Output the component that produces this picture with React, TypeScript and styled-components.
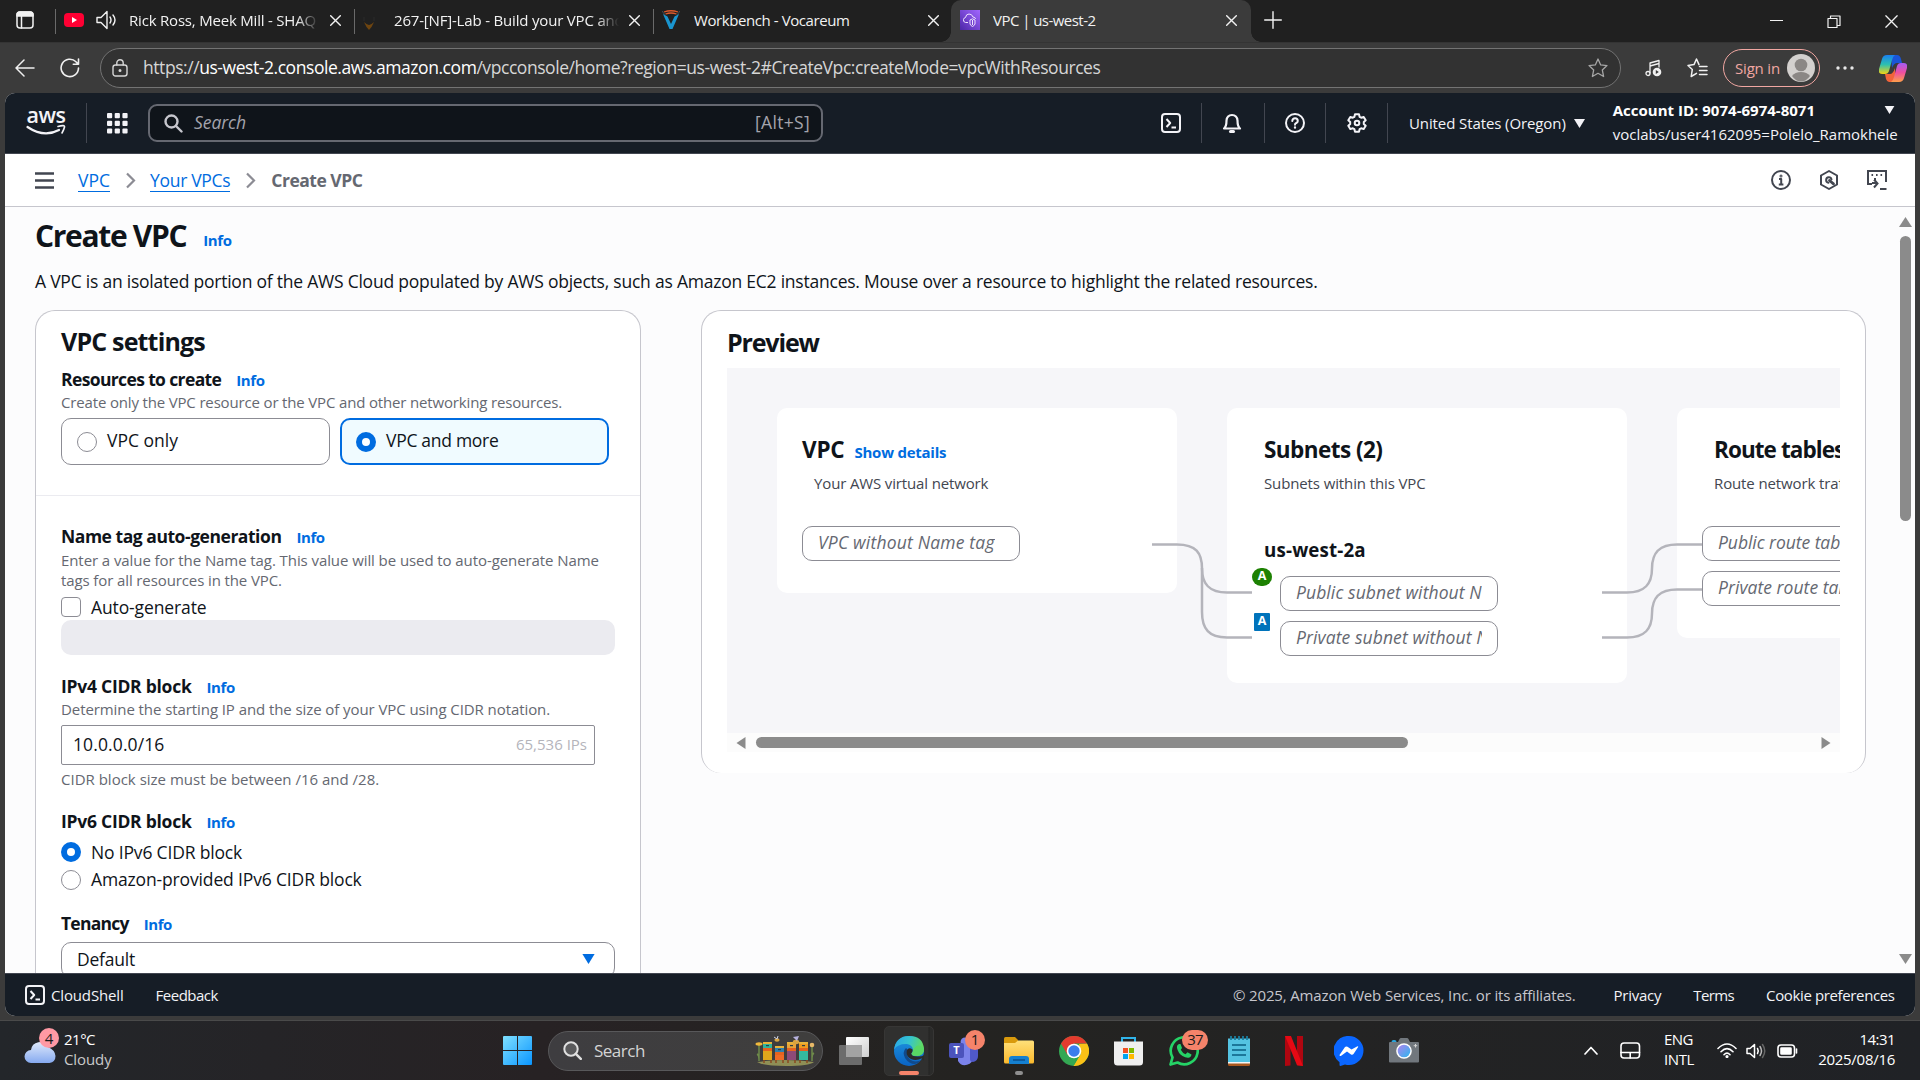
import React from 'react';
import styled, { createGlobalStyle } from 'styled-components';

const Global = createGlobalStyle`
  * { box-sizing: border-box; }
  body { margin: 0; background: #3b3b3b; font-family: "Open Sans", "Noto Sans", sans-serif; overflow: hidden; }
  svg { display: block; flex: none; }
`;

/* ---------- shared ---------- */

type TextProps = { $size?: number; $weight?: number; $ls?: number; $color?: string; $italic?: boolean; $lh?: number; $ml?: number; $mt?: number };

const Text = styled.span<TextProps>`
  display: block;
  flex: none;
  white-space: nowrap;
  font-size: ${p => p.$size ?? 15}px;
  font-weight: ${p => p.$weight ?? 400};
  font-style: ${p => (p.$italic ? 'italic' : 'normal')};
  letter-spacing: ${p => p.$ls ?? 0}px;
  line-height: ${p => p.$lh ?? 20}px;
  color: ${p => p.$color ?? 'inherit'};
  margin-left: ${p => p.$ml ?? 0}px;
  margin-top: ${p => p.$mt ?? 0}px;
`;

const Screen = styled.div`
  width: 1920px;
  height: 1080px;
  display: flex;
  flex-direction: column;
  overflow: hidden;
  background: #3b3b3b;
`;

const Slot = styled.div<{ $ml?: number; $mt?: number }>`
  flex: none;
  display: flex;
  margin-left: ${p => p.$ml ?? 0}px;
  margin-top: ${p => p.$mt ?? 0}px;
`;

const Stroke = ({ w, h, sw = 1.5, children, color = 'currentColor', vb }: { w: number; h: number; sw?: number; color?: string; vb?: string; children: React.ReactNode }) => (
  <svg width={w} height={h} viewBox={vb ?? `0 0 ${w} ${h}`} fill="none" stroke={color} strokeWidth={sw} strokeLinecap="round" strokeLinejoin="round">
    {children}
  </svg>
);

/* ---------- browser chrome ---------- */

const TabStrip = styled.div`
  height: 42px;
  flex: none;
  display: flex;
  background: #202020;
  color: #f2f2f2;
`;

const WorkspaceCell = styled.div`
  width: 55px;
  padding: 11px 0 0 16px;
`;

const Tab = styled.div<{ $w: number; $active?: boolean }>`
  width: ${p => p.$w}px;
  flex: none;
  height: 42px;
  display: flex;
  align-items: center;
  padding-bottom: 2px;
  position: relative;
  background: ${p => (p.$active ? '#3b3b3b' : 'transparent')};
  border-radius: 10px 10px 0 0;
  ${p => p.$active && `
    &::before, &::after {
      content: '';
      position: absolute;
      bottom: 0;
      width: 10px;
      height: 10px;
    }
    &::before { left: -10px; background: radial-gradient(circle at 0 0, #202020 9.5px, #3b3b3b 10px); }
    &::after { right: -10px; background: radial-gradient(circle at 100% 0, #202020 9.5px, #3b3b3b 10px); }
  `}
`;

const TabLine = styled.i`
  width: 1px;
  height: 25px;
  margin-top: 9px;
  background: #6a6a6a;
  flex: none;
`;

const TabTitle = styled(Text)<{ $w: number; $fade?: boolean }>`
  width: ${p => p.$w}px;
  overflow-x: clip;
  margin-top: -1px;
  ${p => p.$fade && 'mask-image: linear-gradient(90deg, #000 calc(100% - 22px), transparent);'}
`;

const WindowButtons = styled.div`
  margin-left: auto;
  display: flex;
  gap: 44px;
  padding: 15px 22px 0 0;
`;

const Cross = ({ s = 11, sw = 1.4 }: { s?: number; sw?: number }) => (
  <Stroke w={s} h={s} sw={sw} vb="0 0 11 11"><path d="M.7.7l9.6 9.6M10.3.7L.7 10.3" /></Stroke>
);

const Toolbar = styled.div`
  height: 51px;
  flex: none;
  display: flex;
  align-items: center;
  color: #f0f0f0;
  border-top: 1px solid #343434;
  padding: 0 0 0 15px;
`;

const UrlPill = styled.div`
  width: 1521px;
  height: 40px;
  margin-left: 20px;
  display: flex;
  align-items: center;
  border: 1px solid #737373;
  border-radius: 20px;
  background: #323232;
  color: #d6d6d6;
  padding: 0 12px 0 11px;
  b { font-weight: 400; color: #fff; }
`;

const SignIn = styled.div`
  width: 97px;
  height: 38px;
  margin-left: 15px;
  display: flex;
  align-items: center;
  justify-content: space-between;
  border: 1.5px solid #f1a7a2;
  border-radius: 19px;
  padding: 0 4px 0 11px;
`;

const Browser = () => (
  <>
    <TabStrip>
      <WorkspaceCell>
        <Stroke w={18} h={18} sw={1.5}><rect x="1" y="1" width="16" height="16" rx="3" /><path d="M1 3.500a2.500 2.500 0 012.500-2.500h11A2.500 2.500 0 0117 3.500V5H1z" fill="currentColor" /><path d="M5.500 5v12" /></Stroke>
      </WorkspaceCell>
      <TabLine />
      <Tab $w={298}>
        <Slot $ml={8}><svg width="20" height="14" viewBox="0 0 20 14"><rect width="20" height="14" rx="4" fill="#f03" /><path d="M8 4l5 3-5 3z" fill="#fff" /></svg></Slot>
        <Slot $ml={12}><Stroke w={21} h={20} sw={1.4}><path d="M1 7.500h4L11 1.500v17L5 12.500H1z M14 7q2 3 0 6 M17 5q4 5 0 10" /></Stroke></Slot>
        <TabTitle $w={190} $fade $ls={-0.2} $ml={12}>Rick Ross, Meek Mill - SHAQ</TabTitle>
        <Slot $ml={11} $mt={1}><Cross /></Slot>
      </Tab>
      <TabLine />
      <Tab $w={298}>
        <Slot $ml={8} $mt={8}><svg width="12" height="14" viewBox="0 0 12 14"><path d="M1 5q2 5 5 8 3-3 5-8-3 3-5 3T1 5z" fill="#6e4510" /><path d="M1 0v4M11 0v4" stroke="#2b2b2b" /></svg></Slot>
        <TabTitle $w={225} $fade $ls={-0.18} $ml={19}>267-[NF]-Lab - Build your VPC and</TabTitle>
        <Slot $ml={10} $mt={1}><Cross /></Slot>
      </Tab>
      <TabLine />
      <Tab $w={297}>
        <Slot $ml={8}>
          <svg width="18" height="20" viewBox="0 0 18 20"><path d="M1 4l4.500 2.500L9 14l3.500-7.500L17 4 10.500 19h-3z" fill="#1a95cf" /><path d="M2 2q7-2.500 14 0M3.500 4q5.500-2 11 0" stroke="#dd5a2b" strokeWidth="1.300" fill="none" /><path d="M0 1l3 4M18 1l-3 4" stroke="#3f4d55" /></svg>
        </Slot>
        <TabTitle $w={200} $ls={-0.42} $ml={14}>Workbench - Vocareum</TabTitle>
        <Slot $ml={34} $mt={1}><Cross /></Slot>
      </Tab>
      <Tab $w={300} $active>
        <Slot $ml={9}>
          <svg width="20" height="20" viewBox="0 0 20 20"><defs><linearGradient id="vpcg" x1="0" y1="1" x2="1" y2="0"><stop stopColor="#4d27a8" /><stop offset="1" stopColor="#a166ff" /></linearGradient></defs><rect width="20" height="20" fill="url(#vpcg)" /><path d="M8 12.500H5.500Q3 12 3.500 9.500 4 7.500 5.500 7.500 6 4 9 4t4 3q2.500.3 2.500 2M10 10l2.500-1.200L15 10v4q-1 2-2.500 2.500Q11 16 10 14zM12.500 10v5" fill="none" stroke="#efe2ff" /></svg>
        </Slot>
        <TabTitle $w={200} $ls={-0.54} $ml={13}>VPC | us-west-2</TabTitle>
        <Slot $ml={33} $mt={1}><Cross /></Slot>
      </Tab>
      <Slot $ml={13} $mt={11}><Stroke w={18} h={18} sw={1.4}><path d="M9 .7v16.600M.7 9h16.600" /></Stroke></Slot>
      <WindowButtons>
        <Stroke w={13} h={13} sw={1.2}><path d="M0 5.500h13" /></Stroke>
        <Stroke w={14} h={13} sw={1.2}><path d="M1 3.500h9v9H1zM3.500 3V1H13v9.500h-2.500" /></Stroke>
        <Cross s={13} sw={1.1} />
      </WindowButtons>
    </TabStrip>
    <Toolbar>
      <Stroke w={20} h={18} sw={1.5}><path d="M19 9H1M9 1L1 9l8 8" /></Stroke>
      <Slot $ml={25}><Stroke w={20} h={20} sw={1.6}><path d="M18.500 10A8.700 8.700 0 1116 3.800L18.300 6M18.500 1v5.200h-5.200" /></Stroke></Slot>
      <UrlPill>
        <Stroke w={16} h={18} sw={1.4}><rect x="1" y="6" width="14" height="11" rx="2.500" /><path d="M4.800 6V4a3.200 3.200 0 016.400 0v2" /><circle cx="8" cy="11.500" r=".8" /></Stroke>
        <Text $size={17.5} $ls={-0.44} $ml={15} $mt={-2}>https://<b>us-west-2.console.aws.amazon.com</b>/vpcconsole/home?region=us-west-2#CreateVpc:createMode=vpcWithResources</Text>
        <Slot $ml={488}><Stroke w={20} h={20} sw={1.3} color="#a6a6a6"><path d="M10 1l2.700 5.900 6.300.7-4.700 4.300L15.600 18.500 10 15.300 4.400 18.500 5.700 11.900 1 7.600l6.300-.7z" /></Stroke></Slot>
      </UrlPill>
      <Slot $ml={24}>
        <Stroke w={17} h={18} sw={1.3}><path d="M5 14V4l9-2.500V8M5 7l9-2.500" /><circle cx="3" cy="14.500" r="2" /><circle cx="12" cy="13" r="4.300" fill="#f0f0f0" stroke="none" /><path d="M10.800 11v4l3-2z" fill="#3b3b3b" stroke="none" /></Stroke>
      </Slot>
      <Slot $ml={25}>
        <Stroke w={21} h={20} sw={1.5}><path d="M12 6.600L9.500 1 7 6.600 1 7.500l4.300 4L4.200 18.500 9.500 15.300M12.500 8.500H20M12.500 12.500H20M12.500 16.500H20" /></Stroke>
      </Slot>
      <SignIn>
        <Text $ls={-0.18} $mt={-1} $color="#f1a7a2">Sign in</Text>
        <svg width="28" height="28" viewBox="0 0 28 28"><circle cx="14" cy="14" r="14" fill="#d3d0ce" /><circle cx="14" cy="11" r="6.300" fill="#8b8785" /><path d="M5 22q3-4 9-4t9 4q-4 5.500-9 5.500T5 22z" fill="#8b8785" /></svg>
      </SignIn>
      <Slot $ml={16}><svg width="18" height="4" viewBox="0 0 18 4" fill="#e8e8e8"><circle cx="2" cy="2" r="1.700" /><circle cx="9" cy="2" r="1.700" /><circle cx="16" cy="2" r="1.700" /></svg></Slot>
      <Slot $ml={25}>
        <svg width="28" height="27" viewBox="0 0 28 27">
          <defs>
            <linearGradient id="cpa" x1="0" y1="0" x2="0" y2="1"><stop stopColor="#1a7ff0" /><stop offset=".5" stopColor="#2cc0b0" /><stop offset="1" stopColor="#f4d514" /></linearGradient>
            <linearGradient id="cpb" x1="0" y1="0" x2="0" y2="1"><stop stopColor="#a45cf5" /><stop offset=".5" stopColor="#ee4fa0" /><stop offset="1" stopColor="#ff9f4a" /></linearGradient>
          </defs>
          <path d="M12 0h6q3 0 4 4l1 4h-5q-3 0-5 5z" fill="#1a55d8" />
          <path d="M16 27h-6q-2 0-3-3L6 19h5q3 0 5-6z" fill="#f2643a" />
          <path d="M8 0h8q-2 1-3 5l-3 11q-1 3-4 3H3q-4 0-3-5L3 4q1-4 5-4z" fill="url(#cpa)" />
          <path d="M20 27h-8q2-1 3-5l3-11q1-3 4-3h3q4 0 3 5l-3 10q-1 4-5 4z" fill="url(#cpb)" />
        </svg>
      </Slot>
    </Toolbar>
  </>
);

/* ---------- AWS page frame ---------- */

const Page = styled.div`
  width: 1910px;
  height: 923px;
  flex: none;
  margin-left: 5px;
  display: flex;
  flex-direction: column;
  border-radius: 10px;
  overflow: hidden;
  background: #fcfcfd;
  color: #0f141a;
`;

const AwsHeader = styled.header`
  height: 61px;
  flex: none;
  display: flex;
  align-items: center;
  background: #161d26;
  border-bottom: 1px solid #424650;
  color: #f3f3f7;
`;

const HeaderLine = styled.i<{ $ml: number }>`
  width: 1px;
  height: 40px;
  flex: none;
  background: #424650;
  margin-left: ${p => p.$ml}px;
`;

const AwsLogo = styled.div`
  width: 40px;
  height: 28px;
  margin-left: 21px;
  margin-top: 2px;
  display: flex;
  flex-direction: column;
  align-items: center;
`;

const SearchBox = styled.div`
  width: 675px;
  height: 38px;
  margin-left: 20px;
  display: flex;
  align-items: center;
  justify-content: space-between;
  border: 2px solid #656871;
  border-radius: 9px;
  background: #0f141a;
  color: #a4a4ad;
  padding: 0 11px 0 14px;
`;

const Row = styled.div<{ $gap?: number; $mt?: number; $h?: number }>`
  display: flex;
  align-items: center;
  gap: ${p => p.$gap ?? 0}px;
  margin-top: ${p => p.$mt ?? 0}px;
  ${p => p.$h && `height: ${p.$h}px;`}
`;

const AccountBlock = styled.div`
  width: 286px;
  margin-left: 28px;
  margin-top: -3px;
  display: flex;
  flex-direction: column;
  gap: 4px;
`;

const Caret = ({ w = 11, h = 9, color = '#f3f3f7' }: { w?: number; h?: number; color?: string }) => (
  <svg width={w} height={h} viewBox="0 0 11 9"><path d="M0 0h11L5.500 9z" fill={color} /></svg>
);

const ShellIcon = () => (
  <Stroke w={20} h={20} sw={2}><rect x="1" y="1" width="18" height="18" rx="3" /><path d="M5.500 6l3.700 4-3.700 4M10.500 14.500H15" strokeLinecap="butt" /></Stroke>
);

const Header = () => (
  <AwsHeader>
    <AwsLogo>
      <Text $size={21.5} $weight={600} $ls={-0.5} $lh={16} $mt={-3}>aws</Text>
      <Stroke w={40} h={13} sw={2.2}><path d="M1.500 4Q18 15 33 7" /><path d="M32 3.500q7-2 6.500.5T36 10" strokeWidth="1.600" /></Stroke>
    </AwsLogo>
    <HeaderLine $ml={20} />
    <Slot $ml={20}>
      <svg width="21" height="21" viewBox="0 0 21 21" fill="#f3f3f7">
        {[0, 7.7, 15.4].map(y => [0, 7.7, 15.4].map(x => <rect key={`${x}-${y}`} x={x} y={y} width="5.200" height="5.200" rx="1" />))}
      </svg>
    </Slot>
    <SearchBox>
      <Row $gap={11}>
        <Stroke w={19} h={19} sw={2.4} color="#c6c6cd"><circle cx="7.500" cy="7.500" r="6" /><path d="M12 12l5.500 5.500" /></Stroke>
        <Text $size={17.5} $italic $ls={-0.06} $mt={-2}>Search</Text>
      </Row>
      <Text $size={17.5} $ls={0.32} $mt={-2}>[Alt+S]</Text>
    </SearchBox>
    <Slot $ml={338}><ShellIcon /></Slot>
    <HeaderLine $ml={20} />
    <Slot $ml={20}><Stroke w={20} h={21} sw={2.2}><path d="M2 15.500q2.500-2 2.500-8Q5 2 10 2t5.500 5.500q0 6 2.500 8z" /><path d="M8.500 18.500h3" strokeWidth="3" /></Stroke></Slot>
    <HeaderLine $ml={22} />
    <Slot $ml={20}><Stroke w={20} h={20} sw={2}><circle cx="10" cy="10" r="9" /><path d="M7.300 8q.2-2.700 2.800-2.700T12.800 8q0 1.300-1.500 2T10 11.800" /><path d="M10 14.500v.2" strokeWidth="2.300" /></Stroke></Slot>
    <HeaderLine $ml={20} />
    <Slot $ml={21}>
      <Stroke w={20} h={20} sw={2}>
        <path d="M8 1.200h4l.6 2.600 1.600.9 2.500-.8 2 3.400L16.800 9.100v1.800l1.900 1.800-2 3.400-2.500-.8-1.600.9-.6 2.600H8l-.6-2.600-1.600-.9-2.500.8-2-3.400 1.900-1.800V9.100L1.300 7.300l2-3.400 2.500.8 1.600-.9z" />
        <circle cx="10" cy="10" r="2.300" />
      </Stroke>
    </Slot>
    <HeaderLine $ml={20} />
    <Text $ls={-0.1} $ml={21}>United States (Oregon)</Text>
    <Slot $ml={8}><Caret /></Slot>
    <AccountBlock>
      <Row>
        <Text $weight={700} $ls={0.01} $color="#fff">Account ID: 9074-6974-8071</Text>
        <Slot $ml={69}><Caret h={8} /></Slot>
      </Row>
      <Text>voclabs/user4162095=Polelo_Ramokhele</Text>
    </AccountBlock>
  </AwsHeader>
);

const CrumbBar = styled.nav`
  height: 53px;
  flex: none;
  display: flex;
  align-items: center;
  background: #fff;
  border-bottom: 1px solid #c6c6cd;
  color: #424650;
  padding-left: 30px;
`;

const CrumbLink = styled(Text)`
  color: #006ce0;
  border-bottom: 1px solid #006ce0;
  height: 22px;
  margin-top: 1px;
`;

const Chevron = () => <Stroke w={11} h={17} sw={2.2} color="#8c8c94"><path d="M2 1.500l7 7-7 7" strokeLinecap="butt" strokeLinejoin="miter" /></Stroke>;

const CrumbTools = styled.div`
  margin-left: auto;
  margin-right: 28px;
  display: flex;
  align-items: center;
  gap: 28px;
`;

const Crumbs = () => (
  <CrumbBar>
    <Stroke w={19} h={17} sw={2.4}><path d="M0 1.500h19M0 8.500h19M0 15.500h19" strokeLinecap="butt" /></Stroke>
    <Slot $ml={24}><CrumbLink $size={17.5}>VPC</CrumbLink></Slot>
    <Slot $ml={15}><Chevron /></Slot>
    <Slot $ml={14}><CrumbLink $size={17.5} $ls={-0.3}>Your VPCs</CrumbLink></Slot>
    <Slot $ml={15}><Chevron /></Slot>
    <Text $size={17.5} $weight={700} $ls={-0.5} $ml={15} $mt={-1} $color="#656871">Create VPC</Text>
    <CrumbTools>
      <Stroke w={20} h={20} sw={2}><circle cx="10" cy="10" r="9" /><path d="M8 9h2.200v5.500M7.800 14.500h4.600" strokeLinecap="butt" /><circle cx="10" cy="6" r=".5" /></Stroke>
      <Stroke w={20} h={20} sw={2}><path d="M10 1l8 4.500v9L10 19l-8-4.500v-9z" /><path d="M9.500 12.700a2.700 2.700 0 113-3.200" /><path d="M10.500 10.500l4 3.300" strokeWidth="2.800" /></Stroke>
      <Stroke w={20} h={20} sw={2}><path d="M5 14H1V1h18v11M8 8v5M5 13h5M7 9.500l3.500 4L7 17.500M13 19h6.500" strokeLinecap="butt" strokeLinejoin="miter" /><path d="M4.500 5h1.600M9 5h1.600M13.500 5h1.600" strokeWidth="2.200" strokeLinecap="butt" /></Stroke>
    </CrumbTools>
  </CrumbBar>
);

/* ---------- content ---------- */

const Content = styled.main`
  height: 766px;
  flex: none;
  display: flex;
  overflow: hidden;
`;

const Body = styled.div`
  width: 1890px;
  flex: none;
  padding: 14px 0 0 30px;
  overflow: hidden;
`;

const Columns = styled.div`
  display: flex;
  align-items: flex-start;
  margin-top: 19px;
  gap: 60px;
`;

const Card = styled.section<{ $w: number; $h: number }>`
  width: ${p => p.$w}px;
  height: ${p => p.$h}px;
  flex: none;
  border: 1px solid #c6c6cd;
  border-bottom-width: 0;
  border-radius: 20px;
  background: #fff;
  padding: 15px 25px 0;
`;

const Info = ({ ml = 15, mt = 1 }: { ml?: number; mt?: number }) => <Text $weight={700} $ls={-0.4} $color="#006ce0" $ml={ml} $mt={mt}>Info</Text>;

const Label = ({ text, ls, mt }: { text: string; ls: number; mt: number }) => (
  <Row $mt={mt} $h={20}>
    <Text $size={17.5} $weight={700} $ls={ls}>{text}</Text>
    <Info />
  </Row>
);

const Help = styled(Text)`
  color: #656871;
`;

const Tiles = styled.div`
  display: flex;
  gap: 10px;
  margin-top: 6px;
`;

const Tile = styled.div<{ $on?: boolean }>`
  width: 269px;
  height: 47px;
  display: flex;
  align-items: center;
  gap: 10px;
  padding: 0 0 0 ${p => (p.$on ? 14 : 15)}px;
  border: ${p => (p.$on ? '2px solid #006ce0' : '1px solid #8c8c94')};
  border-radius: 10px;
  background: ${p => (p.$on ? '#f0fbff' : '#fff')};
  ${Text} { margin-top: -3px; }
`;

const Radio = styled.i<{ $on?: boolean }>`
  width: 20px;
  height: 20px;
  flex: none;
  border-radius: 50%;
  background: #fff;
  border: ${p => (p.$on ? '6px solid #006ce0' : '1px solid #8c8c94')};
`;

const Checkbox = styled.i`
  width: 20px;
  height: 20px;
  flex: none;
  border-radius: 4px;
  border: 1px solid #8c8c94;
`;

const SectionRule = styled.hr`
  height: 1px;
  border: 0;
  margin: 30px -25px 0;
  background: #ebebf0;
`;

const DisabledInput = styled.div`
  width: 554px;
  height: 35px;
  margin-top: 3px;
  border-radius: 10px;
  background: #ebebf0;
`;

const CidrInput = styled.div`
  width: 534px;
  height: 40px;
  margin-top: 6px;
  display: flex;
  align-items: center;
  justify-content: space-between;
  border: 1px solid #8c8c94;
  border-radius: 2px;
  padding: 0 7px 3px 11px;
`;

const Select = styled.div`
  width: 554px;
  height: 36px;
  margin-top: 9px;
  display: flex;
  align-items: center;
  justify-content: space-between;
  border: 1px solid #8c8c94;
  border-radius: 10px;
  padding: 0 19px 2px 15px;
`;

const Settings = () => (
  <Card $w={606} $h={900}>
    <Text $size={25} $weight={700} $ls={-0.83} $lh={30}>VPC settings</Text>
    <Label text="Resources to create" ls={-0.63} mt={13} />
    <Help $ls={-0.16} $mt={3}>Create only the VPC resource or the VPC and other networking resources.</Help>
    <Tiles>
      <Tile><Radio /><Text $size={17.5}>VPC only</Text></Tile>
      <Tile $on><Radio $on /><Text $size={17.5} $ls={-0.29}>VPC and more</Text></Tile>
    </Tiles>
    <SectionRule />
    <Label text="Name tag auto-generation" ls={-0.46} mt={30} />
    <Help $ls={-0.08} $mt={4}>Enter a value for the Name tag. This value will be used to auto-generate Name</Help>
    <Help $ls={-0.11}>tags for all resources in the VPC.</Help>
    <Row $mt={7} $gap={10}><Checkbox /><Text $size={17.5} $ls={-0.12} $mt={-1}>Auto-generate</Text></Row>
    <DisabledInput />
    <Label text="IPv4 CIDR block" ls={-0.26} mt={21} />
    <Help $ls={-0.08} $mt={3}>Determine the starting IP and the size of your VPC using CIDR notation.</Help>
    <CidrInput>
      <Text $size={17.5} $ls={0.11}>10.0.0.0/16</Text>
      <Text $color="#b4b4bb">65,536 IPs</Text>
    </CidrInput>
    <Help $mt={4}>CIDR block size must be between /16 and /28.</Help>
    <Label text="IPv6 CIDR block" ls={-0.26} mt={22} />
    <Row $mt={11} $gap={10}><Radio $on /><Text $size={17.5} $ls={-0.17} $mt={-1}>No IPv6 CIDR block</Text></Row>
    <Row $mt={8} $gap={10}><Radio /><Text $size={17.5} $ls={-0.15} $mt={-2}>Amazon-provided IPv6 CIDR block</Text></Row>
    <Label text="Tenancy" ls={-0.76} mt={23} />
    <Select><Text $size={17.5} $ls={-0.22}>Default</Text><Caret w={13} h={10} color="#006ce0" /></Select>
  </Card>
);

const Diagram = styled.div`
  width: 1113px;
  height: 365px;
  margin-top: 11px;
  display: flex;
  align-items: flex-start;
  gap: 50px;
  padding: 40px 0 0 50px;
  position: relative;
  overflow: hidden;
  background: #f6f6f9;
`;

const Node = styled.div<{ $h: number; $pl?: number }>`
  width: 400px;
  height: ${p => p.$h}px;
  flex: none;
  padding: 27px 0 0 ${p => p.$pl ?? 37}px;
  border-radius: 10px;
  background: #fff;
`;

const Pill = styled.div<{ $mt?: number }>`
  width: 218px;
  height: 35px;
  flex: none;
  display: flex;
  align-items: center;
  margin-top: ${p => p.$mt ?? 0}px;
  border: 1px solid #8c8c94;
  border-radius: 10px;
  padding: 0 15px 3px 15px;
  color: #656871;
  ${Text} { flex: 0 1 auto; min-width: 0; overflow-x: clip; }
`;

const PillColumn = styled.div<{ $ml: number; $mt: number }>`
  display: flex;
  flex-direction: column;
  gap: 10px;
  margin: ${p => p.$mt}px 0 0 ${p => p.$ml}px;
`;

const SubnetRow = styled.div`
  display: flex;
  height: 35px;
`;

const BadgeCell = styled.div`
  width: 27px;
  flex: none;
  margin-top: -8px;
  display: flex;
  justify-content: center;
  align-items: flex-start;
  padding-right: 9px;
`;

const ZoneBadge = styled.div<{ $round?: boolean }>`
  width: ${p => (p.$round ? 20 : 16)}px;
  height: 18px;
  flex: none;
  display: flex;
  align-items: center;
  justify-content: center;
  padding-bottom: 2px;
  border-radius: ${p => (p.$round ? '10px' : '1px')};
  background: ${p => (p.$round ? '#1d8102' : '#0073bb')};
  color: #fff;
`;

const Wires = styled.svg`
  position: absolute;
  left: 0;
  top: 0;
`;

const HScroll = styled.div`
  width: 1113px;
  height: 19px;
  display: flex;
  align-items: center;
  background: #fcfcfc;
  padding: 0 9px;
`;

const HThumb = styled.div`
  width: 652px;
  height: 11px;
  margin: 0 auto 0 10px;
  border-radius: 6px;
  background: #8b8b8b;
`;

const Preview = () => (
  <Card $w={1165} $h={463}>
    <Text $size={25} $weight={700} $ls={-1.15} $lh={30} $mt={1}>Preview</Text>
    <Diagram>
      <Node $h={185} $pl={25}>
        <Row $h={30}>
          <Text $size={22.5} $weight={700} $ls={-0.2} $lh={30}>VPC</Text>
          <Text $weight={700} $ls={-0.25} $color="#006ce0" $ml={10} $mt={3}>Show details</Text>
        </Row>
        <Text $ls={-0.14} $ml={12} $mt={8} $color="#424650">Your AWS virtual network</Text>
        <Pill $mt={33}><Text $size={17.5} $italic $ls={0.19}>VPC without Name tag</Text></Pill>
      </Node>
      <Node $h={275}>
        <Text $size={22.5} $weight={700} $ls={-0.55} $lh={30}>Subnets (2)</Text>
        <Text $ls={-0.12} $mt={8} $color="#424650">Subnets within this VPC</Text>
        <Text $size={18.75} $weight={700} $ls={0.15} $mt={47}>us-west-2a</Text>
        <PillColumn $ml={-11} $mt={16}>
          <SubnetRow>
            <BadgeCell><ZoneBadge $round><Text $size={12.5} $weight={700}>A</Text></ZoneBadge></BadgeCell>
            <Pill><Text $size={17.5} $italic $ls={0.09}>Public subnet without N</Text></Pill>
          </SubnetRow>
          <SubnetRow>
            <BadgeCell><ZoneBadge><Text $size={12.5} $weight={700}>A</Text></ZoneBadge></BadgeCell>
            <Pill><Text $size={17.5} $italic $ls={0.09}>Private subnet without N</Text></Pill>
          </SubnetRow>
        </PillColumn>
      </Node>
      <Node $h={230}>
        <Text $size={22.5} $weight={700} $ls={-0.93} $lh={30}>Route tables (2)</Text>
        <Text $ls={-0.12} $mt={8} $color="#424650">Route network traffic to resources</Text>
        <PillColumn $ml={-12} $mt={33}>
          <Pill><Text $size={17.5} $italic $ls={-0.05}>Public route table</Text></Pill>
          <Pill><Text $size={17.5} $italic $ls={0.05}>Private route table</Text></Pill>
        </PillColumn>
      </Node>
      <Wires width="1113" height="365" viewBox="727 368 1113 365" fill="none" stroke="#b4b4bb" strokeWidth="2.500">
        <path d="M1152 544.500H1177C1196 544.500 1202 553 1202 568.500C1202 584 1209 592.500 1227 592.500H1252" />
        <path d="M1202 568V612C1202 629 1209 637.500 1227 637.500H1252" />
        <path d="M1602 592.500H1627C1645 592.500 1652 584 1652 568.500C1652 553 1659 544.500 1677 544.500H1702" />
        <path d="M1602 637.500H1627C1645 637.500 1652 629 1652 613.500C1652 598 1659 589.500 1677 589.500H1702" />
      </Wires>
    </Diagram>
    <HScroll>
      <svg width="10" height="12" viewBox="0 0 10 12"><path d="M9.500 0v12L.5 6z" fill="#8b8b8b" /></svg>
      <HThumb />
      <svg width="10" height="12" viewBox="0 0 10 12"><path d="M.5 0v12l9-6z" fill="#8b8b8b" /></svg>
    </HScroll>
  </Card>
);

const VScroll = styled.div`
  width: 20px;
  flex: none;
  display: flex;
  flex-direction: column;
  align-items: center;
  padding: 10px 0 9px;
`;

const VThumb = styled.div`
  width: 11px;
  height: 285px;
  margin: 9px 0 auto;
  border-radius: 6px;
  background: #8b8b8b;
`;

const Footer = styled.footer`
  height: 43px;
  flex: none;
  display: flex;
  align-items: center;
  background: #161d26;
  border-top: 1px solid #424650;
  color: #f3f3f7;
  padding: 0 20px;
  ${Text} { margin-top: -1px; }
`;

const Aws = () => (
  <Page>
    <Header />
    <Crumbs />
    <Content>
      <Body>
        <Row $h={30}>
          <Text $size={30} $weight={700} $ls={-1.33} $lh={30}>Create VPC</Text>
          <Info ml={17} mt={8} />
        </Row>
        <Text $size={17.5} $ls={-0.227} $mt={20}>A VPC is an isolated portion of the AWS Cloud populated by AWS objects, such as Amazon EC2 instances. Mouse over a resource to highlight the related resources.</Text>
        <Columns>
          <Settings />
          <Preview />
        </Columns>
      </Body>
      <VScroll>
        <svg width="13" height="10" viewBox="0 0 13 10"><path d="M0 10h13L6.500 0z" fill="#8b8b8b" /></svg>
        <VThumb />
        <svg width="13" height="10" viewBox="0 0 13 10"><path d="M0 0h13L6.500 10z" fill="#8b8b8b" /></svg>
      </VScroll>
    </Content>
    <Footer>
      <ShellIcon />
      <Text $weight={500} $ls={-0.15} $ml={6}>CloudShell</Text>
      <Text $weight={500} $ls={-0.5} $ml={32}>Feedback</Text>
      <Text $ls={-0.14} $ml={1015} $color="#c6c6cd">© 2025, Amazon Web Services, Inc. or its affiliates.</Text>
      <Text $weight={500} $ls={-0.25} $ml={38}>Privacy</Text>
      <Text $weight={500} $ls={-0.6} $ml={32}>Terms</Text>
      <Text $weight={500} $ls={-0.37} $ml={32}>Cookie preferences</Text>
    </Footer>
  </Page>
);

/* ---------- Windows taskbar ---------- */

const Taskbar = styled.div`
  height: 60px;
  flex: none;
  margin-top: 4px;
  display: flex;
  align-items: center;
  border-top: 1px solid #4a4a4a;
  background: linear-gradient(90deg, #23262a 0, #272224 28%, #242321 50%, #232323 70%, #202226 100%);
  color: #fff;
`;

const Weather = styled.div`
  width: 503px;
  display: flex;
  align-items: center;
  padding-left: 24px;
`;

const IconBox = styled.div<{ $w: number; $ml: number }>`
  width: ${p => p.$w}px;
  height: 30px;
  flex: none;
  margin-left: ${p => p.$ml}px;
  position: relative;
  display: flex;
  align-items: center;
  justify-content: center;
`;

const Badge = styled.div<{ $w?: number; $x: number; $y: number; $bg?: string }>`
  position: absolute;
  left: ${p => p.$x}px;
  top: ${p => p.$y}px;
  width: ${p => p.$w ?? 20}px;
  height: 20px;
  display: flex;
  align-items: center;
  justify-content: center;
  border-radius: 10px;
  background: ${p => p.$bg ?? '#f5836a'};
  color: #1b1b1b;
`;

const TaskSearch = styled.div`
  width: 275px;
  height: 40px;
  margin-left: 16px;
  display: flex;
  align-items: center;
  border: 1px solid #58585a;
  border-radius: 20px;
  background: linear-gradient(90deg, #3e3d40, #3f3e3d);
  padding-left: 14px;
  color: #d4d4d4;
`;

const EdgeButton = styled.div`
  width: 50px;
  height: 50px;
  margin-left: 15px;
  flex: none;
  position: relative;
  display: flex;
  align-items: center;
  padding-left: 9px;
  border: 1px solid #373635;
  border-radius: 5px;
  background: linear-gradient(90deg, #30302f 43px, #232322 44px, #2b2b2a 45px);
`;

const Indicator = styled.i<{ $w: number; $x: number; $y: number; $c: string }>`
  position: absolute;
  left: ${p => p.$x}px;
  top: ${p => p.$y}px;
  width: ${p => p.$w}px;
  height: 4px;
  border-radius: 2px;
  background: ${p => p.$c};
`;

const TeamsTile = styled.div`
  position: absolute;
  left: 0;
  top: 7px;
  width: 15px;
  height: 15px;
  display: flex;
  align-items: center;
  justify-content: center;
  border-radius: 2px;
  background: #4b53bc;
`;

const Tray = styled.div`
  margin-left: auto;
  display: flex;
  align-items: center;
  padding-right: 25px;
`;

const Stack = styled.div<{ $ml: number; $end?: boolean; $w?: number }>`
  display: flex;
  flex-direction: column;
  align-items: ${p => (p.$end ? 'flex-end' : 'flex-start')};
  margin-left: ${p => p.$ml}px;
  margin-top: -3px;
  ${p => p.$w && `width: ${p.$w}px;`}
`;

const hives = [[8, 8, '#e0a51c', '#2fb59b'], [20, 12, '#ee6a26', '#2f7fae'], [32, 8, '#8d4a78', '#e6a33a'], [44, 8, '#35b99e', '#f09a1e']] as const;

const TaskbarView = () => (
  <Taskbar>
    <Weather>
      <IconBox $w={32} $ml={0}>
        <svg width="32" height="24" viewBox="0 0 32 24"><defs><linearGradient id="cl" x1="0" y1="0" x2="0" y2="1"><stop stopColor="#dfe9fb" /><stop offset="1" stopColor="#86aaf0" /></linearGradient></defs><path d="M7 24a6.500 6.500 0 010-13 9 9 0 0117-3q7 3 7.500 9 0 6-6 7z" fill="url(#cl)" /></svg>
        <Badge $x={15} $y={-8} $bg="#ff99a4"><Text $size={15}>4</Text></Badge>
      </IconBox>
      <Stack $ml={8}>
        <Text $ls={-0.5}>21°C</Text>
        <Text $ls={-0.09} $color="#c9c9c9">Cloudy</Text>
      </Stack>
    </Weather>
    <svg width="29" height="29" viewBox="0 0 29 29"><defs><linearGradient id="win" x1="0" y1="0" x2="1" y2="1"><stop stopColor="#7fe0ff" /><stop offset="1" stopColor="#0a95ff" /></linearGradient></defs><path d="M0 1q0-1 1-1h13v14H0zM15 0h13q1 0 1 1v13H15zM0 15h14v14H1q-1 0-1-1zM15 15h14v13q0 1-1 1H15z" fill="url(#win)" /></svg>
    <TaskSearch>
      <Stroke w={19} h={19} sw={2} color="#e0e0e0"><circle cx="8" cy="8" r="6.700" fill="#5a5a5c" /><path d="M12.800 12.800l5 5" strokeWidth="2.500" /></Stroke>
      <Text $size={17} $ls={-0.5} $ml={12}>Search</Text>
      <Slot $ml={110}>
        <svg width="61" height="30" viewBox="0 0 61 30">
          <path d="M2 26q28-4 57 0-5 4-28 4T2 26z" fill="#8f8f56" />
          <path d="M4 25V9M57 25V10M2 18q2 1 2 5M59 17q-2 1-2 5" stroke="#6e8a4a" strokeWidth="1.500" fill="none" />
          <ellipse cx="4" cy="8" rx="3.500" ry="1.700" fill="#f0b83c" /><circle cx="57" cy="9" r="2.300" fill="#e7b868" />
          {hives.map(([x, y, a, b]) => (
            <g key={x}><rect x={x} y={y - 2} width="9" height="2" fill="#e8b33a" /><rect x={x} y={y} width="9" height="4" fill={b} /><rect x={x} y={y + 4} width="9" height="3" fill="#e5631f" /><rect x={x} y={y + 7} width="9" height={17 - y} fill={a} /><path d={`M${x + 1} 24v3M${x + 8} 24v3`} stroke="#8a4a20" strokeWidth="1.500" /><rect x={x + 3} y={y + 1} width="3" height="1.200" fill="#2c3f48" /></g>
          ))}
          <ellipse cx="22" cy="4" rx="2.600" ry="1.700" fill="#d9a441" /><path d="M19 1l3 2 1-3" stroke="#cdd3e8" fill="none" />
          <ellipse cx="41" cy="6" rx="3.200" ry="2.200" fill="#d9a441" /><path d="M38 1l4 4 2-5z" fill="#b7b2e0" />
        </svg>
      </Slot>
    </TaskSearch>
    <IconBox $w={30} $ml={16}>
      <svg width="30" height="28" viewBox="0 0 30 28"><defs><linearGradient id="tv" x1="0" y1="0" x2="1" y2="1"><stop stopColor="#fff" /><stop offset="1" stopColor="#cfcfcf" /></linearGradient></defs><rect x="7" y="0" width="23" height="20" rx="1" fill="url(#tv)" /><rect x="0" y="8" width="23" height="20" rx="1" fill="#6c6c6c" /><rect x="7" y="8" width="16" height="12" fill="#a3a3a3" /></svg>
    </IconBox>
    <EdgeButton>
      <svg width="30" height="30" viewBox="0 0 30 30">
        <defs>
          <linearGradient id="ea" x1="0" y1=".2" x2="1" y2=".4"><stop stopColor="#2aa7e8" /><stop offset=".5" stopColor="#35c4cf" /><stop offset="1" stopColor="#63dc5a" /></linearGradient>
          <linearGradient id="eb" x1="0" y1="0" x2="0" y2="1"><stop stopColor="#1f96e0" /><stop offset="1" stopColor="#0a63c4" /></linearGradient>
        </defs>
        <circle cx="15" cy="15" r="15" fill="url(#eb)" />
        <path d="M0 13.500Q2 0 15 0q14 0 15 13 0 7-7.500 7-5 0-5-2.500Q19 16 19 14q-.5-5-6-6Q4 7.500 0 13.500z" fill="url(#ea)" />
        <path d="M12 12q-4 4-1 10 4 6 10 6 3-.5 6.500-4Q21 27 16 23.500q-5-5-2.500-10z" fill="#114a8b" />
        <path d="M13 14q-2 6 4 9 5 2 10.500-.5 1-.5.500 1l3 1.500V18q-1 2.500-7.500 2.500t-6-3.500Q19 16 18.500 13.500 15 11 13 14z" fill="#2b2b2a" />
        <path d="M17.500 17.500Q19 16 19 14q4-8 11-2 0 8-7.500 8-5 0-5-2.500z" fill="#58d765" />
      </svg>
      <Indicator $w={20} $x={14} $y={44} $c="#f5836a" />
    </EdgeButton>
    <IconBox $w={30} $ml={15}>
      <svg width="30" height="30" viewBox="0 0 30 30"><circle cx="16" cy="6" r="4.500" fill="#7b83eb" /><path d="M9 10h15v11a8 8 0 01-15 4z" fill="#7b83eb" /><path d="M21 11h8v9q0 5-5 6-3 0-3-3z" fill="#5059c9" /></svg>
      <TeamsTile><Text $size={11} $weight={700} $lh={14}>T</Text></TeamsTile>
      <Badge $x={16} $y={-6}><Text $mt={-1}>1</Text></Badge>
    </IconBox>
    <IconBox $w={30} $ml={25}>
      <svg width="30" height="27" viewBox="0 0 30 27"><defs><linearGradient id="fo" x1="0" y1="0" x2="0" y2="1"><stop stopColor="#ffe07a" /><stop offset="1" stopColor="#fbb92c" /></linearGradient></defs><path d="M0 1.500Q0 0 1.500 0H11l3 3v4H0z" fill="#d99a0c" /><path d="M0 6h11l3-2.500h14.500q1.500 0 1.500 1.500v20q0 1.500-1.500 1.500h-27Q0 26.500 0 25z" fill="url(#fo)" /><path d="M5 27v-5q0-3 3-3h14q3 0 3 3v5z" fill="#1580d0" /><path d="M9 23h12" stroke="#0b4f8e" strokeWidth="1.500" /></svg>
      <Indicator $w={8} $x={11} $y={35} $c="#8f8f8f" />
    </IconBox>
    <IconBox $w={30} $ml={25}>
      <svg width="30" height="30" viewBox="0 0 30 30"><circle cx="15" cy="15" r="15" fill="#34a853" /><path d="M28 7.500A15 15 0 0114.500 30L21.500 18.500 20 8z" fill="#fbc116" /><path d="M2 7.500A15 15 0 0114.500 30L21 18.500 9 18.500z" fill="#2da44e" /><path d="M2 7.500A15 15 0 0128 7.500H15L8.500 18.700z" fill="#e33b2e" /><circle cx="15" cy="15" r="7.300" fill="#fff" /><circle cx="15" cy="15" r="5.700" fill="#3b7ded" /></svg>
    </IconBox>
    <IconBox $w={29} $ml={25}>
      <svg width="29" height="30" viewBox="0 0 29 30"><path d="M8 6V2h13v4" fill="none" stroke="#30b4ea" strokeWidth="2" /><path d="M0 5.500h29V26q0 3.500-3.500 3.500h-22Q0 29.500 0 26z" fill="#efefef" /><path d="M9 12h5v5H9z" fill="#f25022" /><path d="M15 12h5v5h-5z" fill="#7fba00" /><path d="M9 18h5v5H9z" fill="#00a4ef" /><path d="M15 18h5v5h-5z" fill="#ffb900" /></svg>
    </IconBox>
    <IconBox $w={30} $ml={26}>
      <svg width="30" height="30" viewBox="0 0 30 30"><path d="M1.500 28.500l2-7A13.500 13.500 0 118.500 26.500z" fill="none" stroke="#25d366" strokeWidth="2.700" strokeLinejoin="round" /><path d="M10 8q-2.500 1-2 4 1 5 5.500 8 4 2.500 7 1.500 2-1 2-3l-4-2.200-2 1.900q-3-1.200-4.700-4.500L13 12l-1.500-4z" fill="#25d366" /></svg>
      <Badge $w={26} $x={13} $y={-6}><Text $ls={-0.8} $mt={-1}>37</Text></Badge>
    </IconBox>
    <IconBox $w={22} $ml={29}>
      <svg width="22" height="30" viewBox="0 0 22 30"><rect x="0" y="25" width="22" height="5" rx="1.500" fill="#a9581e" /><rect x="0" y="24" width="22" height="3.500" fill="#f4f4f4" /><path d="M0 2.500h22V26H0z" fill="#54c3e2" /><path d="M3 0v4M7 0v4M11 0v4M15 0v4M19 0v4" stroke="#1a7fa0" strokeWidth="1.800" /><path d="M4 9h14M4 14h14M4 19h14" stroke="#0a5f82" strokeWidth="1.700" /></svg>
    </IconBox>
    <IconBox $w={18} $ml={35}>
      <svg width="18" height="30" viewBox="0 0 18 30"><path d="M0 0h5.500v29.500L0 30zM12 0h6v30l-6-.7z" fill="#b00610" /><path d="M0 0h6l12 30-6-.7z" fill="#e50914" /></svg>
    </IconBox>
    <IconBox $w={30} $ml={31}>
      <svg width="30" height="30" viewBox="0 0 30 30"><path d="M15 0a14.500 14.500 0 110 29q-2 0-4-.6L6.500 30q-1 0-1-1v-2.800A14.500 14.500 0 0115 0z" fill="#0a66ff" /><path d="M5.500 19l5.500-8q1-1 2.500-.3L17.500 13.500l5.500-3q1.800-.5 1 .8L19.500 18q-1 1.200-2.500.4L13 15.500l-5.800 4.200q-1.700.7-1.700-.7z" fill="#fff" /></svg>
    </IconBox>
    <IconBox $w={30} $ml={25}>
      <svg width="30" height="25" viewBox="0 0 30 25"><defs><linearGradient id="le" x1="0" y1="0" x2="1" y2="1"><stop stopColor="#b083f0" /><stop offset="1" stopColor="#2bb7ee" /></linearGradient></defs><rect x="2.500" y="2" width="5" height="5" rx="2" fill="#2aa4dc" /><path d="M9 4l1.500-3q.5-1 1.500-1h6q1 0 1.500 1L21 4h8q1 0 1 1v18.500q0 1-1 1H1q-1 0-1-1V5q0-1 1-1z" fill="#71777d" /><circle cx="15" cy="13" r="7.800" fill="#fff" /><circle cx="15" cy="13" r="6.300" fill="url(#le)" /><path d="M26.500 6v3.500M24.700 7.700h3.500" stroke="#d5d5d5" /></svg>
    </IconBox>
    <Tray>
      <Stroke w={14} h={9} sw={1.7}><path d="M1 8l6-6.500L13 8" /></Stroke>
      <Slot $ml={22}><Stroke w={21} h={17} sw={1.6}><rect x="1" y="1" width="18.500" height="15" rx="3" /><path d="M1 10.500h18.500M10.200 10.500V16" /></Stroke></Slot>
      <Stack $ml={23} $w={53}><Text $ls={-0.6}>ENG</Text><Text $ls={-0.39}>INTL</Text></Stack>
      <Stroke w={20} h={15} sw={1.6}><path d="M1 5.500q9-9 18 0M4 8.700q6-6 12 0M7 11.700q3-3 6 0" /><circle cx="10" cy="13.500" r=".8" /></Stroke>
      <Slot $ml={9}><Stroke w={20} h={16} sw={1.5}><path d="M1 5.500h3L8.500 1.500v13L4 10.500H1zM11.500 5.500q1.500 2.500 0 5" /><path d="M14 3.500q3 4.500 0 9" stroke="#bbb" /><path d="M16.500 1.500q4.500 6.500 0 13" stroke="#666" /></Stroke></Slot>
      <Slot $ml={11}><Stroke w={21} h={14} sw={1.6}><rect x="1" y="1" width="16.500" height="12" rx="3" /><rect x="4" y="4" width="10" height="6" rx=".5" fill="currentColor" /><path d="M19.500 5v4" /></Stroke></Slot>
      <Stack $ml={20} $end $w={77}><Text $ls={-0.57}>14:31</Text><Text $ls={-0.28}>2025/08/16</Text></Stack>
    </Tray>
  </Taskbar>
);

export default function App() {
  return (
    <Screen>
      <Global />
      <Browser />
      <Aws />
      <TaskbarView />
    </Screen>
  );
}
